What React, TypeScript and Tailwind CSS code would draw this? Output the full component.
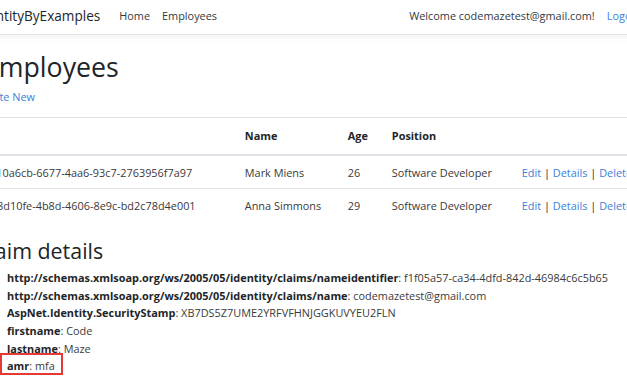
import React from "react";

const employees = [
  { id: "c410a6cb-6677-4aa6-93c7-2763956f7a97", name: "Mark Miens", age: 26, position: "Software Developer" },
  { id: "a18d10fe-4b8d-4606-8e9c-bd2c78d4e001", name: "Anna Simmons", age: 29, position: "Software Developer" },
];

const claims = [
  { type: "http://schemas.xmlsoap.org/ws/2005/05/identity/claims/nameidentifier", value: "f1f05a57-ca34-4dfd-842d-46984c6c5b65" },
  { type: "http://schemas.xmlsoap.org/ws/2005/05/identity/claims/name", value: "codemazetest@gmail.com" },
  { type: "AspNet.Identity.SecurityStamp", value: "XB7DS5Z7UME2YRFVFHNJGGKUVYEU2FLN" },
  { type: "firstname", value: "Code" },
  { type: "lastname", value: "Maze" },
  { type: "amr", value: "mfa" },
];

export default function App() {
  return (
    <div className="w-[627px] h-[376px] overflow-hidden bg-white text-[10.9px] leading-[17.6px] text-[#212529] font-['Open_Sans',sans-serif]">
      <div className="-ml-[24px] w-[684px]">
        <nav className="h-[35px] pb-[2px] flex items-center border-b border-[#e5e5e5] shadow-[0_3px_9px_rgba(0,0,0,0.05)]">
          <a className="text-[13.6px] text-[#212529] mr-[13px]">IdentityByExamples</a>
          <a className="px-[6px] text-[#343a40]">Home</a>
          <a className="px-[6px] text-[#343a40]">Employees</a>
          <div className="ml-auto flex items-center pr-[12px]">
            <span className="px-[6px] text-[#343a40]">Welcome codemazetest@gmail.com!</span>
            <a className="px-[6px] text-[#3c7fd8]">Logout</a>
          </div>
        </nav>

        <main className="pt-[12px]">
          <h1 className="ml-[8px] pt-[2px] text-[26.7px] leading-[35.2px] font-normal mb-[4px]">Employees</h1>
          <p className="mb-[11.7px]">
            <a className="text-[#3c7fd8]">Create New</a>
          </p>

          <table className="table-fixed border-collapse w-full mb-[16px]">
            <thead>
              <tr>
                <th className="w-[260px] px-[8.8px] py-[8.8px] text-left font-bold border-t border-b-2 border-[#dee2e6]"></th>
                <th className="w-[103px] px-[8.8px] py-[8.8px] text-left font-bold border-t border-b-2 border-[#dee2e6]">Name</th>
                <th className="w-[44px] px-[8.8px] py-[8.8px] text-left font-bold border-t border-b-2 border-[#dee2e6]">Age</th>
                <th className="w-[130px] px-[8.8px] py-[8.8px] text-left font-bold border-t border-b-2 border-[#dee2e6]">Position</th>
                <th className="px-[8.8px] py-[8.8px] border-t border-b-2 border-[#dee2e6]"></th>
              </tr>
            </thead>
            <tbody className="text-[#3a3a3a]">
              {employees.map((e) => (
                <tr key={e.id} className="border-t border-[#dee2e6]">
                  <td className="px-[8.8px] pt-[8.6px] pb-[6px] whitespace-nowrap">{e.id}</td>
                  <td className="px-[8.8px] pt-[8.6px] pb-[6px] whitespace-nowrap">{e.name}</td>
                  <td className="px-[8.8px] pt-[8.6px] pb-[6px]">{e.age}</td>
                  <td className="px-[8.8px] pt-[8.6px] pb-[6px] whitespace-nowrap">{e.position}</td>
                  <td className="px-[8.8px] pt-[8.6px] pb-[6px] whitespace-nowrap text-[#3c7fd8]">
                    <a>Edit</a> <span className="text-[#212529]">|</span> <a>Details</a>{" "}
                    <span className="text-[#212529]">|</span> <a>Delete</a>
                  </td>
                </tr>
              ))}
            </tbody>
          </table>

          <h2 className="text-[21.4px] leading-[28.2px] font-normal mb-[4px]">Claim details</h2>
          <ul className="pl-[31px]">
            {claims.map((c) => (
              <li key={c.type} className={c.type === "amr" ? "relative inline-block" : ""}>
                <span className="font-bold text-[#212529]">{c.type}</span>
                <span className="text-[#3a3a3a]">: {c.value}</span>
                {c.type === "amr" && (
                  <span className="absolute -left-[7px] -right-[8px] -top-[4px] bottom-0 border-2 border-[#e53935]" />
                )}
              </li>
            ))}
          </ul>
        </main>
      </div>
    </div>
  );
}
